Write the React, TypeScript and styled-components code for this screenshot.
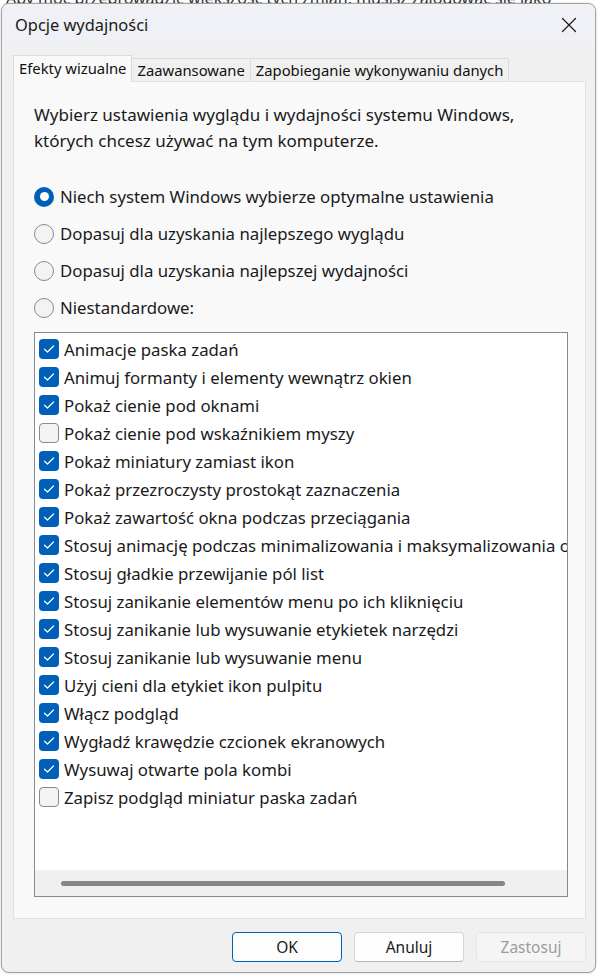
import React from 'react'
import styled, { createGlobalStyle, css } from 'styled-components'

const GlobalStyle = createGlobalStyle`
  html, body {
    margin: 0;
    padding: 0;
    background: #ffffff;
  }
  body {
    font-family: 'Noto Sans', 'Liberation Sans', sans-serif;
    color: #1b1b1b;
    -webkit-font-smoothing: antialiased;
  }
`

const font = `'Noto Sans', 'Liberation Sans', sans-serif`

const StyledPage = styled.div`
  position: relative;
  width: 598px;
  height: 975px;
  overflow: hidden;
  padding: 3px 0 0 1px;
  box-sizing: border-box;
`

const StyledBackdropText = styled.div`
  position: absolute;
  top: -13px;
  left: 6px;
  font-family: ${font};
  font-size: 16px;
  color: #333;
  white-space: nowrap;
`

const StyledWindow = styled.div`
  position: relative;
  width: 595px;
  height: 970px;
  box-sizing: border-box;
  border: 1px solid #a4a4a4;
  border-radius: 8px;
  background: #f0f0f0;
  display: flex;
  flex-direction: column;
  overflow: hidden;
  box-shadow: 0 0 2px rgba(0, 0, 0, 0.25);
`

const StyledTitleBar = styled.div`
  height: 41px;
  flex-shrink: 0;
  background: #eff1f7;
  display: flex;
  align-items: center;
  justify-content: space-between;
  padding: 0 14px 0 13px;
`

const StyledTitle = styled.span`
  font-family: ${font};
  font-size: 16.4px;
  color: #1a1a1a;
`

const StyledClose = styled.button`
  width: 24px;
  height: 24px;
  border: none;
  background: none;
  padding: 0;
  display: flex;
  align-items: center;
  justify-content: center;
`

const StyledBody = styled.div`
  flex: 1;
  display: flex;
  flex-direction: column;
  padding: 10px 9px 10px 11px;
`

const StyledTabs = styled.div`
  display: flex;
  align-items: flex-end;
  height: 26px;
  position: relative;
  z-index: 1;
`

const StyledTab = styled.div<{ $active?: boolean }>`
  font-family: ${font};
  font-size: 14.8px;
  color: #111;
  box-sizing: border-box;
  border: 1px solid #dadada;
  border-bottom: none;
  padding: 0 5px;
  display: flex;
  align-items: center;
  white-space: nowrap;

  ${({ $active }) =>
    $active
      ? css`
          height: 27px;
          margin-bottom: -1px;
          background: #f9f9f9;
          padding: 0 5px 2px 5px;
        `
      : css`
          height: 23px;
          background: #f0f0f0;
          border-left: none;
        `}
`

const StyledPanel = styled.div`
  flex: 1;
  background: #f9f9f9;
  border: 1px solid #e2e2e2;
  display: flex;
  flex-direction: column;
  padding: 20px 17px 21px 20px;
`

const StyledDescription = styled.p`
  margin: 0;
  font-family: ${font};
  font-size: 17px;
  line-height: 26px;
  color: #1a1a1a;
`

const StyledRadioGroup = styled.div`
  display: flex;
  flex-direction: column;
  margin-top: 24px;
`

const StyledRadioRow = styled.label`
  display: flex;
  align-items: center;
  gap: 6px;
  height: 37px;
  font-family: ${font};
  font-size: 16.8px;
  color: #1a1a1a;
`

const StyledRadio = styled.span<{ $checked?: boolean }>`
  width: 20px;
  height: 20px;
  border-radius: 50%;
  box-sizing: border-box;
  flex-shrink: 0;
  display: flex;
  align-items: center;
  justify-content: center;

  ${({ $checked }) =>
    $checked
      ? css`
          background: #005fb8;
          &::after {
            content: '';
            width: 9px;
            height: 9px;
            border-radius: 50%;
            background: #ffffff;
          }
        `
      : css`
          background: #f3f3f3;
          border: 1px solid #8a8a8a;
        `}
`

const StyledList = styled.div`
  margin-top: 6px;
  flex: 1;
  border: 1px solid #868a90;
  background: #ffffff;
  display: flex;
  flex-direction: column;
  overflow: hidden;
`

const StyledItems = styled.div`
  flex: 1;
  padding: 2px 0 0 4px;
  overflow: hidden;
`

const StyledItem = styled.div`
  display: flex;
  align-items: center;
  gap: 5px;
  height: 28px;
  font-family: ${font};
  font-size: 16.8px;
  color: #1a1a1a;
  white-space: nowrap;
`

const StyledCheck = styled.span<{ $checked?: boolean }>`
  width: 20px;
  height: 20px;
  box-sizing: border-box;
  border-radius: 4px;
  flex-shrink: 0;
  display: flex;
  align-items: center;
  justify-content: center;
  background: ${({ $checked }) => ($checked ? '#005fb8' : '#f3f3f3')};
  border: ${({ $checked }) => ($checked ? 'none' : '1px solid #8a8a8a')};
`

const StyledScrollbar = styled.div`
  height: 26px;
  flex-shrink: 0;
  background: #f0f0f0;
  display: flex;
  align-items: center;
  padding-left: 26px;
`

const StyledThumb = styled.div`
  width: 444px;
  height: 5px;
  border-radius: 3px;
  background: #868686;
`

const StyledFooter = styled.div`
  display: flex;
  justify-content: flex-end;
  gap: 12px;
  padding: 13px 0 0 0;
`

const StyledButton = styled.button<{ $variant?: 'default' | 'normal' | 'disabled' }>`
  width: 110px;
  height: 30px;
  box-sizing: border-box;
  border-radius: 4px;
  font-family: ${font};
  font-size: 15.5px;
  padding: 0;

  ${({ $variant }) =>
    $variant === 'default'
      ? css`
          background: #fdfdfd;
          border: 1px solid #005fb8;
          color: #1a1a1a;
        `
      : $variant === 'disabled'
      ? css`
          background: #f5f5f5;
          border: 1px solid #e5e5e5;
          color: #9d9d9d;
        `
      : css`
          background: #fdfdfd;
          border: 1px solid #d4d4d4;
          border-bottom-color: #b8b8b8;
          color: #1a1a1a;
        `}
`

const CheckMark = () => (
  <svg width="12" height="10" viewBox="0 0 12 10" fill="none">
    <path d="M1.5 5.2 L4.5 8 L10.5 2" stroke="#ffffff" strokeWidth="1.2" strokeLinecap="round" strokeLinejoin="round" />
  </svg>
)

const CloseIcon = () => (
  <svg width="16" height="16" viewBox="0 0 16 16" fill="none">
    <path d="M1.5 1.5 L14.5 14.5 M14.5 1.5 L1.5 14.5" stroke="#1a1a1a" strokeWidth="1.2" strokeLinecap="round" />
  </svg>
)

const radios = [
  { label: 'Niech system Windows wybierze optymalne ustawienia', checked: true },
  { label: 'Dopasuj dla uzyskania najlepszego wyglądu' },
  { label: 'Dopasuj dla uzyskania najlepszej wydajności' },
  { label: 'Niestandardowe:' }
]

const items = [
  { label: 'Animacje paska zadań', checked: true },
  { label: 'Animuj formanty i elementy wewnątrz okien', checked: true },
  { label: 'Pokaż cienie pod oknami', checked: true },
  { label: 'Pokaż cienie pod wskaźnikiem myszy', checked: false },
  { label: 'Pokaż miniatury zamiast ikon', checked: true },
  { label: 'Pokaż przezroczysty prostokąt zaznaczenia', checked: true },
  { label: 'Pokaż zawartość okna podczas przeciągania', checked: true },
  { label: 'Stosuj animację podczas minimalizowania i maksymalizowania okien', checked: true },
  { label: 'Stosuj gładkie przewijanie pól list', checked: true },
  { label: 'Stosuj zanikanie elementów menu po ich kliknięciu', checked: true },
  { label: 'Stosuj zanikanie lub wysuwanie etykietek narzędzi', checked: true },
  { label: 'Stosuj zanikanie lub wysuwanie menu', checked: true },
  { label: 'Użyj cieni dla etykiet ikon pulpitu', checked: true },
  { label: 'Włącz podgląd', checked: true },
  { label: 'Wygładź krawędzie czcionek ekranowych', checked: true },
  { label: 'Wysuwaj otwarte pola kombi', checked: true },
  { label: 'Zapisz podgląd miniatur paska zadań', checked: false }
]

export default function App() {
  return (
    <StyledPage>
      <GlobalStyle />
      <StyledBackdropText>
        Aby móc przeprowadzić większość tych zmian, musisz zalogować się jako
      </StyledBackdropText>
      <StyledWindow>
        <StyledTitleBar>
          <StyledTitle>Opcje wydajności</StyledTitle>
          <StyledClose aria-label="Zamknij">
            <CloseIcon />
          </StyledClose>
        </StyledTitleBar>
        <StyledBody>
          <StyledTabs>
            <StyledTab $active>Efekty wizualne</StyledTab>
            <StyledTab>Zaawansowane</StyledTab>
            <StyledTab>Zapobieganie wykonywaniu danych</StyledTab>
          </StyledTabs>
          <StyledPanel>
            <StyledDescription>
              Wybierz ustawienia wyglądu i wydajności systemu Windows,
              <br />
              których chcesz używać na tym komputerze.
            </StyledDescription>
            <StyledRadioGroup>
              {radios.map((r) => (
                <StyledRadioRow key={r.label}>
                  <StyledRadio $checked={r.checked} />
                  {r.label}
                </StyledRadioRow>
              ))}
            </StyledRadioGroup>
            <StyledList>
              <StyledItems>
                {items.map((item) => (
                  <StyledItem key={item.label}>
                    <StyledCheck $checked={item.checked}>
                      {item.checked && <CheckMark />}
                    </StyledCheck>
                    {item.label}
                  </StyledItem>
                ))}
              </StyledItems>
              <StyledScrollbar>
                <StyledThumb />
              </StyledScrollbar>
            </StyledList>
          </StyledPanel>
          <StyledFooter>
            <StyledButton $variant="default">OK</StyledButton>
            <StyledButton>Anuluj</StyledButton>
            <StyledButton $variant="disabled">Zastosuj</StyledButton>
          </StyledFooter>
        </StyledBody>
      </StyledWindow>
    </StyledPage>
  )
}
